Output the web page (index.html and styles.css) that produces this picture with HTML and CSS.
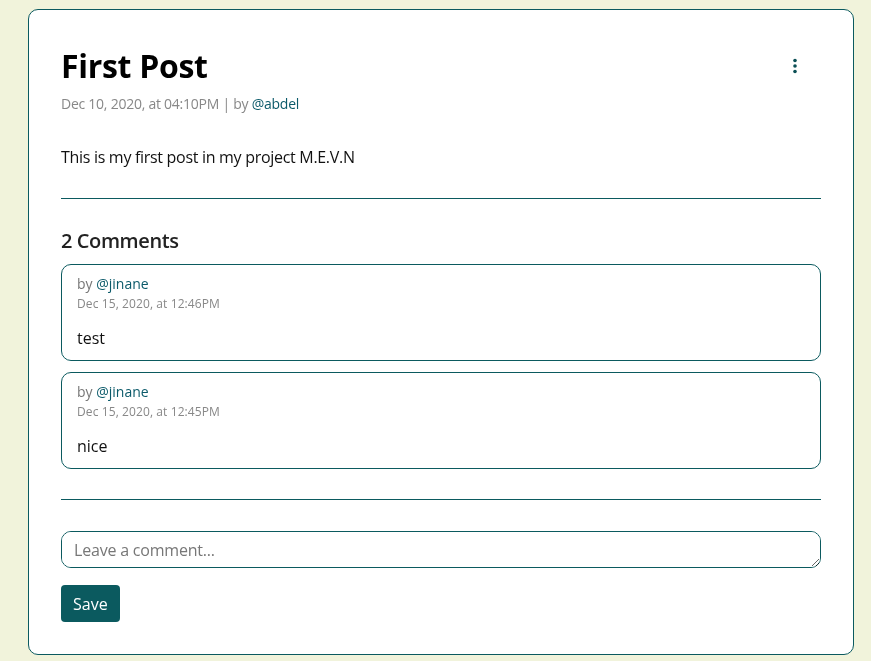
FILE: index.html
```html
<!DOCTYPE html>
<html>
<head>
<meta charset="utf-8">
<link rel="stylesheet" href="styles.css">
</head>
<body>
<div class="page">
  <article class="card">
    <header class="post-head">
      <div>
        <h1 class="title">First Post</h1>
        <div class="meta">Dec 10, 2020, at 04:10PM | by <a class="link">@abdel</a></div>
      </div>
      <button class="kebab" aria-label="menu">
        <svg width="16" height="16" viewBox="0 0 16 16"><circle cx="8" cy="2.5" r="1.8" fill="#0b4f55"/><circle cx="8" cy="8" r="1.8" fill="#0b4f55"/><circle cx="8" cy="13.5" r="1.8" fill="#0b4f55"/></svg>
      </button>
    </header>
    <p class="body">This is my first post in my project M.E.V.N</p>
    <hr class="rule">
    <h2 class="comments-title">2 Comments</h2>
    <div class="comments">
      <div class="comment">
        <div class="by">by <a class="link">@jinane</a></div>
        <div class="date">Dec 15, 2020, at 12:46PM</div>
        <div class="text">test</div>
      </div>
      <div class="comment">
        <div class="by">by <a class="link">@jinane</a></div>
        <div class="date">Dec 15, 2020, at 12:45PM</div>
        <div class="text">nice</div>
      </div>
    </div>
    <hr class="rule rule2">
    <textarea class="input" rows="1" placeholder="Leave a comment..."></textarea>
    <button class="save">Save</button>
  </article>
</div>
</body>
</html>
```
FILE: styles.css
```css
html, body {
  margin: 0;
  padding: 0;
  background: #f1f3db;
}
body {
  font-family: "Open Sans", "Noto Sans", sans-serif;
  color: #111;
}
.page {
  padding: 9px 17px 6px 28px;
}
.card {
  background: #fff;
  border: 1px solid #0b5a5f;
  border-radius: 10px;
  padding: 32px 32px 32px 32px;
}
.post-head {
  display: flex;
  justify-content: space-between;
  align-items: flex-start;
}
.title {
  margin: 0;
  font-size: 32px;
  font-weight: 700;
  line-height: 48px;
  color: #000;
  letter-spacing: -0.3px;
}
.meta {
  font-size: 14px;
  color: #888;
  line-height: 20px;
  margin-top: 4px;
  letter-spacing: -0.25px;
}
.link {
  color: #0b5a6a;
  text-decoration: none;
}
.kebab {
  background: none;
  border: 0;
  padding: 0;
  margin: 16px 18px 0 0;
  width: 16px;
  height: 16px;
}
.body {
  font-size: 16px;
  margin: 31px 0 0 0;
  line-height: 24px;
  letter-spacing: -0.3px;
}
.rule {
  border: 0;
  border-top: 1px solid #0b5a5f;
  margin: 29px 0 0 0;
}
.comments-title {
  margin: 30px 0 0 0;
  font-size: 20px;
  font-weight: 600;
  line-height: 24px;
  color: #222;
  letter-spacing: -0.4px;
}
.comments {
  display: flex;
  flex-direction: column;
  gap: 11px;
  margin-top: 11px;
}
.comment {
  border: 1px solid #0b5a5f;
  border-radius: 10px;
  padding: 9px 15px 10px 15px;
}
.by {
  font-size: 14px;
  color: #777;
  line-height: 20px;
}
.date {
  font-size: 12px;
  color: #888;
  line-height: 20px;
  letter-spacing: 0.1px;
}
.text {
  font-size: 16px;
  line-height: 24px;
  margin-top: 12px;
}
.rule2 {
  margin-top: 30px;
}
.input {
  display: block;
  box-sizing: border-box;
  width: 100%;
  height: 37px;
  margin-top: 31px;
  border: 1px solid #0b5a5f;
  border-radius: 10px;
  padding: 6px 12px;
  font-family: inherit;
  font-size: 16px;
  line-height: 24px;
  resize: vertical;
  color: #222;
  letter-spacing: -0.2px;
}
.input::placeholder {
  color: #777;
}
.save {
  display: block;
  margin-top: 17px;
  height: 37px;
  padding: 0 12px;
  background: #0b5a5f;
  color: #fff;
  border: 0;
  border-radius: 4px;
  font-family: inherit;
  font-size: 16px;
}
```
